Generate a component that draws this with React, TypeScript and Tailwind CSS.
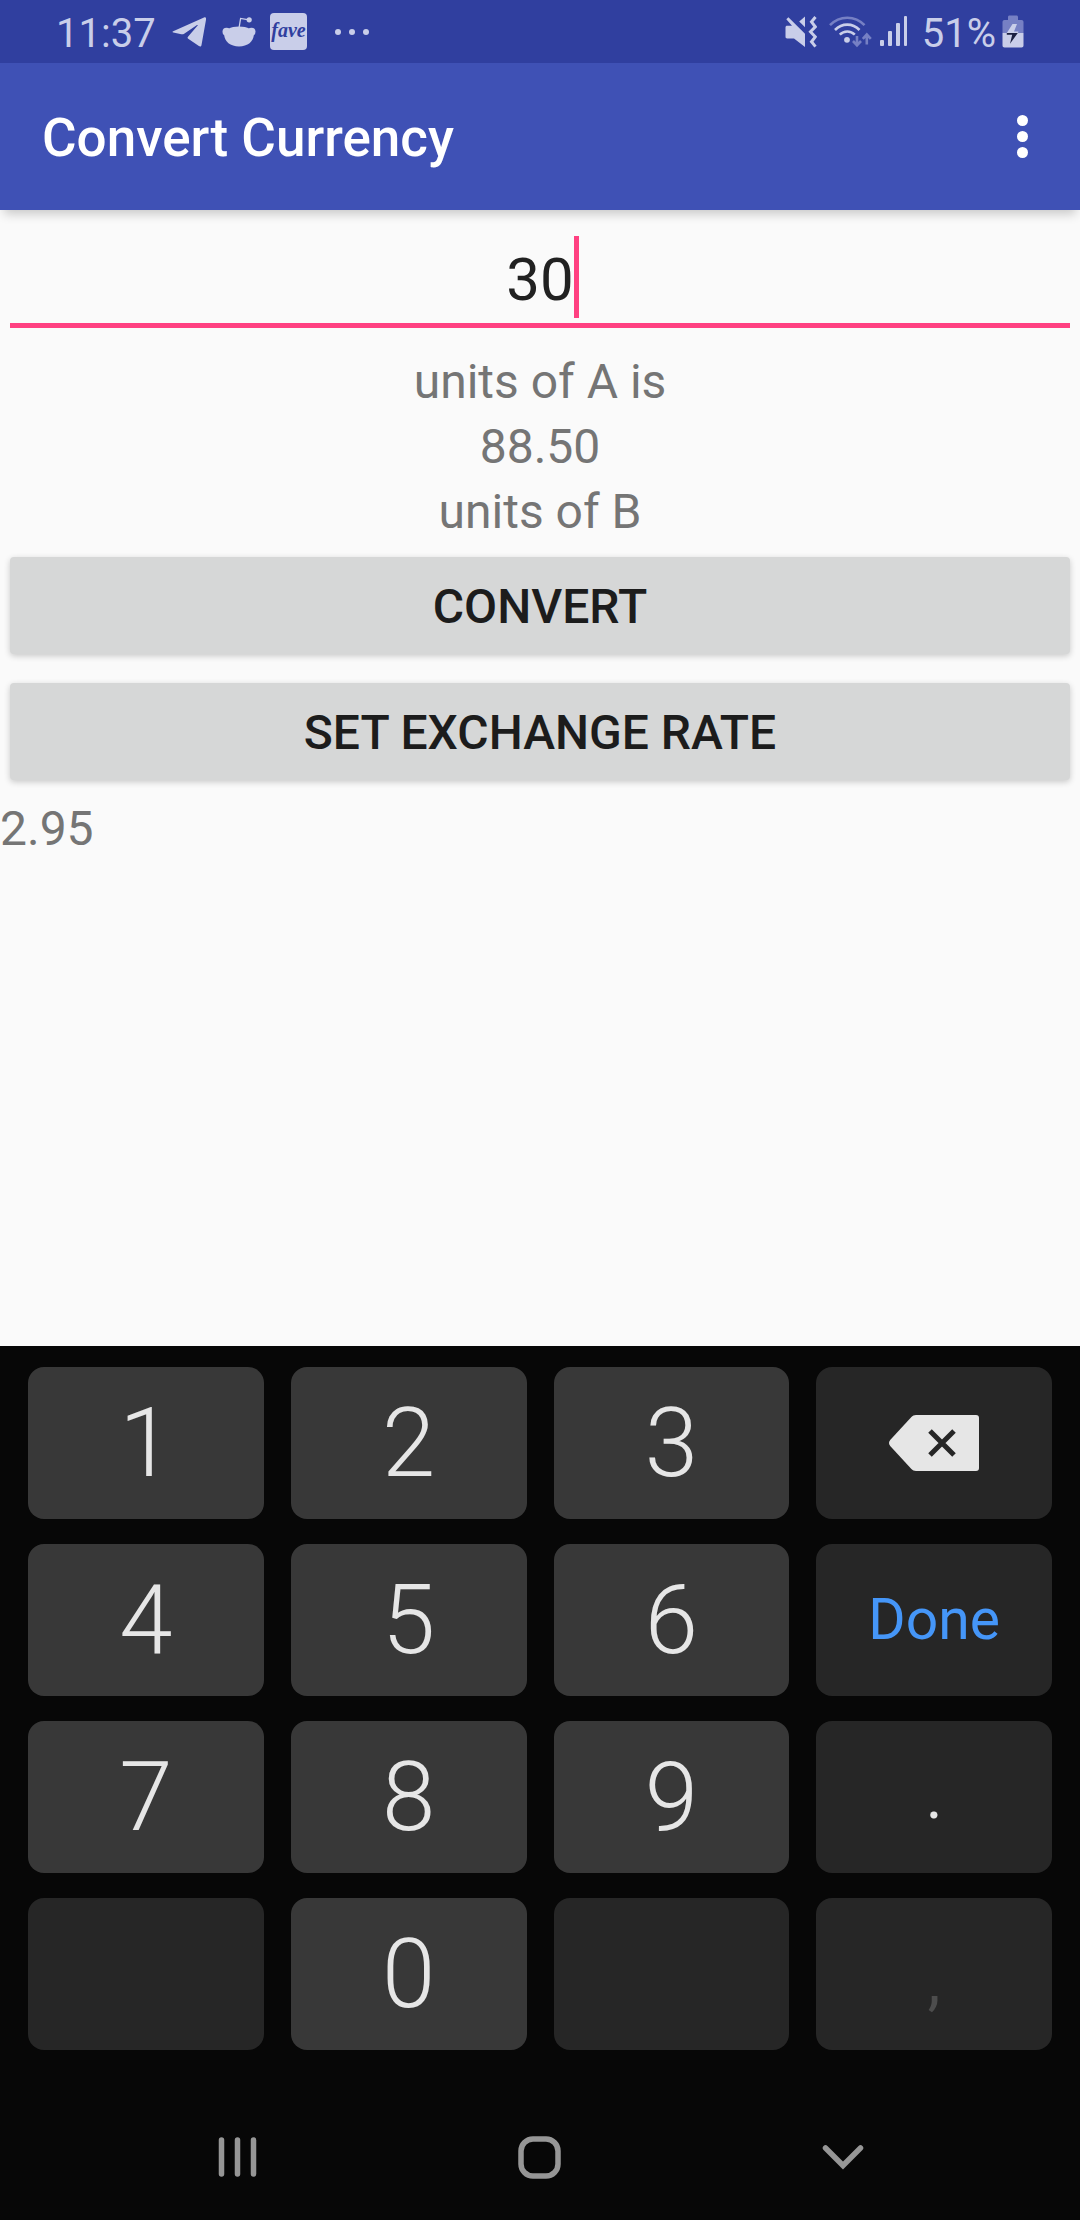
import { useState } from "react";
import type { ReactNode } from "react";

const RATE = 2.95;

function TelegramIcon() {
  return (
    <svg width="34" height="30" viewBox="0 0 34 30" fill="#c9cee9" aria-label="Telegram">
      <path d="M1.200 14.200 32 .5c1.600-.6 2.400.2 2.100 1.800l-4.600 25.600c-.3 1.600-1.300 2-2.600 1.100L16.200 21.700c-.8-.6-.8-1.200-.2-2L25.600 8.500c.4-.5 0-.8-.6-.4L11.800 16.900c-.8.5-1.600.6-2.500.3L1.300 15.600c-1-.3-1.100-.9-.1-1.400Z" />
    </svg>
  );
}

function RedditIcon() {
  return (
    <svg width="34" height="30" viewBox="0 0 34 30" fill="#c9cee9" aria-label="Reddit">
      <path d="M17.200 10 18.600 1.400 25.500 2.600" fill="none" stroke="#c9cee9" strokeWidth="1.300" />
      <circle cx="27.200" cy="2.800" r="2.600" />
      <circle cx="4.500" cy="14.800" r="4" />
      <circle cx="29.500" cy="14.800" r="4" />
      <path d="M2.200 17.500C2.200 13 8.500 9.500 17 9.500s14.800 3.500 14.800 8C31.800 24.500 25.500 29.500 17 29.500S2.200 24.500 2.200 17.500Z" />
    </svg>
  );
}

function MuteVibrateIcon() {
  return (
    <svg width="32" height="32" viewBox="0 0 32 32" fill="#c9cee9" aria-label="Sound muted">
      <path d="M.5 11.500c0-1.100.6-1.700 1.700-1.700H7L1.300 3.200 3.400 1.200 20 17.800V31L9 22.500H2.200C1.100 22.500.5 21.900.5 20.800Z" />
      <path d="M20 .4V11.200L14.200 5.600Z" />
      <path d="m30.500 1-4 4.800 3.800 5-4.800 5 4.800 5-3.800 5 4 4.800" fill="none" stroke="#c9cee9" strokeWidth="3" />
    </svg>
  );
}

function WifiIcon() {
  return (
    <svg width="43" height="32" viewBox="0 0 43 32" fill="none" strokeWidth="2.600" aria-label="Wi-Fi">
      <path d="M1 9.200C10.500-.8 26-.8 35.500 9.200" stroke="#7680c4" />
      <path d="M6 14c7-7.200 17.500-7.200 24.500 0" stroke="#c9cee9" />
      <path d="M10.800 18.600c4.200-4.200 10.700-4.200 15 0" stroke="#c9cee9" />
      <circle cx="18" cy="23.800" r="2.900" fill="#c9cee9" />
      <g stroke="#7680c4" strokeWidth="2.600">
        <path d="M28 20v9M24 25l4 4.300 4-4.300" />
        <path d="M37.800 28.500v-9M33.800 22.800l4-4.300 4 4.300" />
      </g>
    </svg>
  );
}

function SignalIcon() {
  return (
    <svg width="28" height="31" viewBox="0 0 28 31" fill="#c9cee9" aria-label="Signal">
      <rect x="0" y="24" width="4" height="6" rx="1" />
      <rect x="8" y="15" width="4" height="15" rx="1" />
      <rect x="16" y="7" width="4" height="23" rx="1" />
      <rect x="24" y="0" width="3" height="30" rx="1" />
    </svg>
  );
}

function BatteryIcon() {
  return (
    <svg width="22" height="33" viewBox="0 0 22 33" aria-label="Battery charging">
      <path d="M6 5V2c0-1 .6-1.600 1.600-1.600h6.800C15.400.4 16 1 16 2v3h3.500C20.700 5 21.500 5.800 21.500 7v11H.5V7C.5 5.800 1.300 5 2.500 5Z" fill="#7680c4" />
      <path d="M.5 18h21v12.500c0 1.200-.8 2-2 2h-17c-1.200 0-2-.8-2-2Z" fill="#c9cee9" />
      <path d="M10.500 9h4.500l-3 7.500h4.500L15.800 18H4.800Z" fill="#c9cee9" />
      <path d="M4.800 18h11L8 28.800 10.200 19.800H4.800Z" fill="#1b2040" />
    </svg>
  );
}

function BackspaceIcon() {
  return (
    <svg width="90" height="56" viewBox="0 0 90 56" aria-hidden="true">
      <path d="M27 0H87a3 3 0 0 1 3 3V53a3 3 0 0 1-3 3H27c-2 0-3.400-.8-4.600-2L1.200 31C-.4 29.200-.4 26.800 1.200 25L22.400 2C23.600.8 25 0 27 0Z" fill="#e6e6e6" />
      <path d="M41 16 65 40M65 16 41 40" stroke="#262626" strokeWidth="5" />
    </svg>
  );
}

function Key({ label, onClick, dark, className, children }: {
  label: string;
  onClick: () => void;
  dark?: boolean;
  className: string;
  children: ReactNode;
}) {
  return (
    <button
      type="button"
      aria-label={label}
      onClick={onClick}
      className={`flex h-38 items-center justify-center rounded-2xl ${dark ? "bg-[#262626]" : "bg-[#383838]"} ${className}`}
    >
      {children}
    </button>
  );
}

const digitStyle = "text-8xl font-light text-[#e6e6e6]";

export default function App() {
  const [amount, setAmount] = useState("30");
  const [result, setResult] = useState("88.50");
  const append = (c: string) => setAmount((a) => a + c);
  const convert = () => setResult((Number(amount || 0) * RATE).toFixed(2));
  const digit = (d: string) => (
    <Key key={d} label={d} onClick={() => append(d)} className={digitStyle}>{d}</Key>
  );

  return (
    <div className="flex min-h-screen flex-col bg-[#fafafa] font-['Roboto',sans-serif]">
      <div className="flex h-[63px] items-center justify-between bg-[#303f9f] pr-14 pl-14 text-[40px] leading-none text-[#c9cee9]">
        <div className="flex items-center">
          <span className="w-[116px] pt-1">11:37</span>
          <TelegramIcon />
          <div className="ml-4"><RedditIcon /></div>
          <div className="ml-3.5 flex size-[37px] items-center justify-center rounded-sm bg-[#c9cee9] pb-1 font-['Liberation_Serif',serif] text-[20px] font-bold text-[#303f9f] italic">fave</div>
          <div className="ml-7 flex gap-2">
            <i className="size-1.5 rounded-full bg-[#c9cee9]" />
            <i className="size-1.5 rounded-full bg-[#c9cee9]" />
            <i className="size-1.5 rounded-full bg-[#c9cee9]" />
          </div>
        </div>
        <div className="flex items-center">
          <MuteVibrateIcon />
          <div className="ml-3"><WifiIcon /></div>
          <div className="ml-2"><SignalIcon /></div>
          <span className="mr-1.5 ml-3.5 pt-1">51%</span>
          <BatteryIcon />
        </div>
      </div>

      <header className="z-10 flex h-[147px] items-center justify-between bg-[#3f51b5] pr-9 pl-[42px] text-white shadow-[0_8px_10px_-4px_rgba(0,0,0,0.2)]">
        <h1 className="pt-1 text-[53px] leading-none font-medium">Convert Currency</h1>
        <button type="button" aria-label="More options" className="flex w-11 flex-col items-center gap-[5px] py-4">
          <i className="size-[11px] rounded-full bg-white" />
          <i className="size-[11px] rounded-full bg-white" />
          <i className="size-[11px] rounded-full bg-white" />
        </button>
      </header>

      <main className="flex flex-1 flex-col pt-[26px] text-5xl text-[#757575]">
        <div className="relative mx-2.5 text-6xl text-[#212121]">
          <input
            aria-label="Amount in units of A"
            inputMode="decimal"
            value={amount}
            onChange={(e) => setAmount(e.target.value)}
            className="block h-[92px] w-full border-b-[5px] border-[#ff4081] bg-transparent text-center caret-transparent outline-none"
          />
          <span
            className="absolute top-0 h-[82px] w-[5px] bg-[#ff4081]"
            style={{ left: `calc(50% + ${amount.length * 0.28}em)` }}
          />
        </div>
        <div className="mt-[21px] text-center leading-[65px]">
          <p>units of A is</p>
          <p>{result}</p>
          <p>units of B</p>
        </div>
        <div className="mx-2.5 mt-[13px] flex flex-col gap-[29px] font-medium text-[#1c1c1c]">
          <button type="button" onClick={convert} className="h-[97px] rounded bg-[#d6d7d7] pt-0.5 shadow-[0_2px_6px_rgba(0,0,0,0.2)]">CONVERT</button>
          <button type="button" className="h-[97px] rounded bg-[#d6d7d7] pt-0.5 shadow-[0_2px_6px_rgba(0,0,0,0.2)]">SET EXCHANGE RATE</button>
        </div>
        <p className="mt-4 leading-[65px]">{RATE}</p>
      </main>

      <div className="grid grid-cols-4 gap-x-[27px] gap-y-[25px] bg-[#070707] px-7 pt-[21px] pb-11">
        {["1", "2", "3"].map(digit)}
        <Key label="Backspace" dark onClick={() => setAmount((a) => a.slice(0, -1))} className=""><BackspaceIcon /></Key>
        {["4", "5", "6"].map(digit)}
        <Key label="Done" dark onClick={convert} className="text-[57px] text-[#4596f8]">Done</Key>
        {["7", "8", "9"].map(digit)}
        <Key label="Decimal point" dark onClick={() => append(".")} className="text-[64px] text-[#e6e6e6]">.</Key>
        <div className="rounded-2xl bg-[#262626]" />
        {digit("0")}
        <div className="rounded-2xl bg-[#262626]" />
        <Key label="Comma" dark onClick={() => append(",")} className="pt-4 text-[64px] text-[#4d4d4d]">,</Key>
      </div>

      <nav className="grid h-[126px] grid-cols-3 justify-items-center bg-[#070707] px-[86px]">
        <button type="button" aria-label="Recent apps">
          <svg width="40" height="42" viewBox="0 0 40 42" stroke="#969696" strokeWidth="5.500" strokeLinecap="round">
            <path d="M4.500 4v34M20.500 4v34M36.500 4v34" />
          </svg>
        </button>
        <button type="button" aria-label="Home">
          <svg width="43" height="43" viewBox="0 0 43 43" fill="none" stroke="#969696" strokeWidth="5.500">
            <rect x="3" y="3" width="37" height="37" rx="12" />
          </svg>
        </button>
        <button type="button" aria-label="Hide keyboard">
          <svg width="42" height="26" viewBox="0 0 42 26" fill="none" stroke="#969696" strokeWidth="5.500" strokeLinecap="round">
            <path d="M3.500 4 21 21.500 38.500 4" />
          </svg>
        </button>
      </nav>
    </div>
  );
}
